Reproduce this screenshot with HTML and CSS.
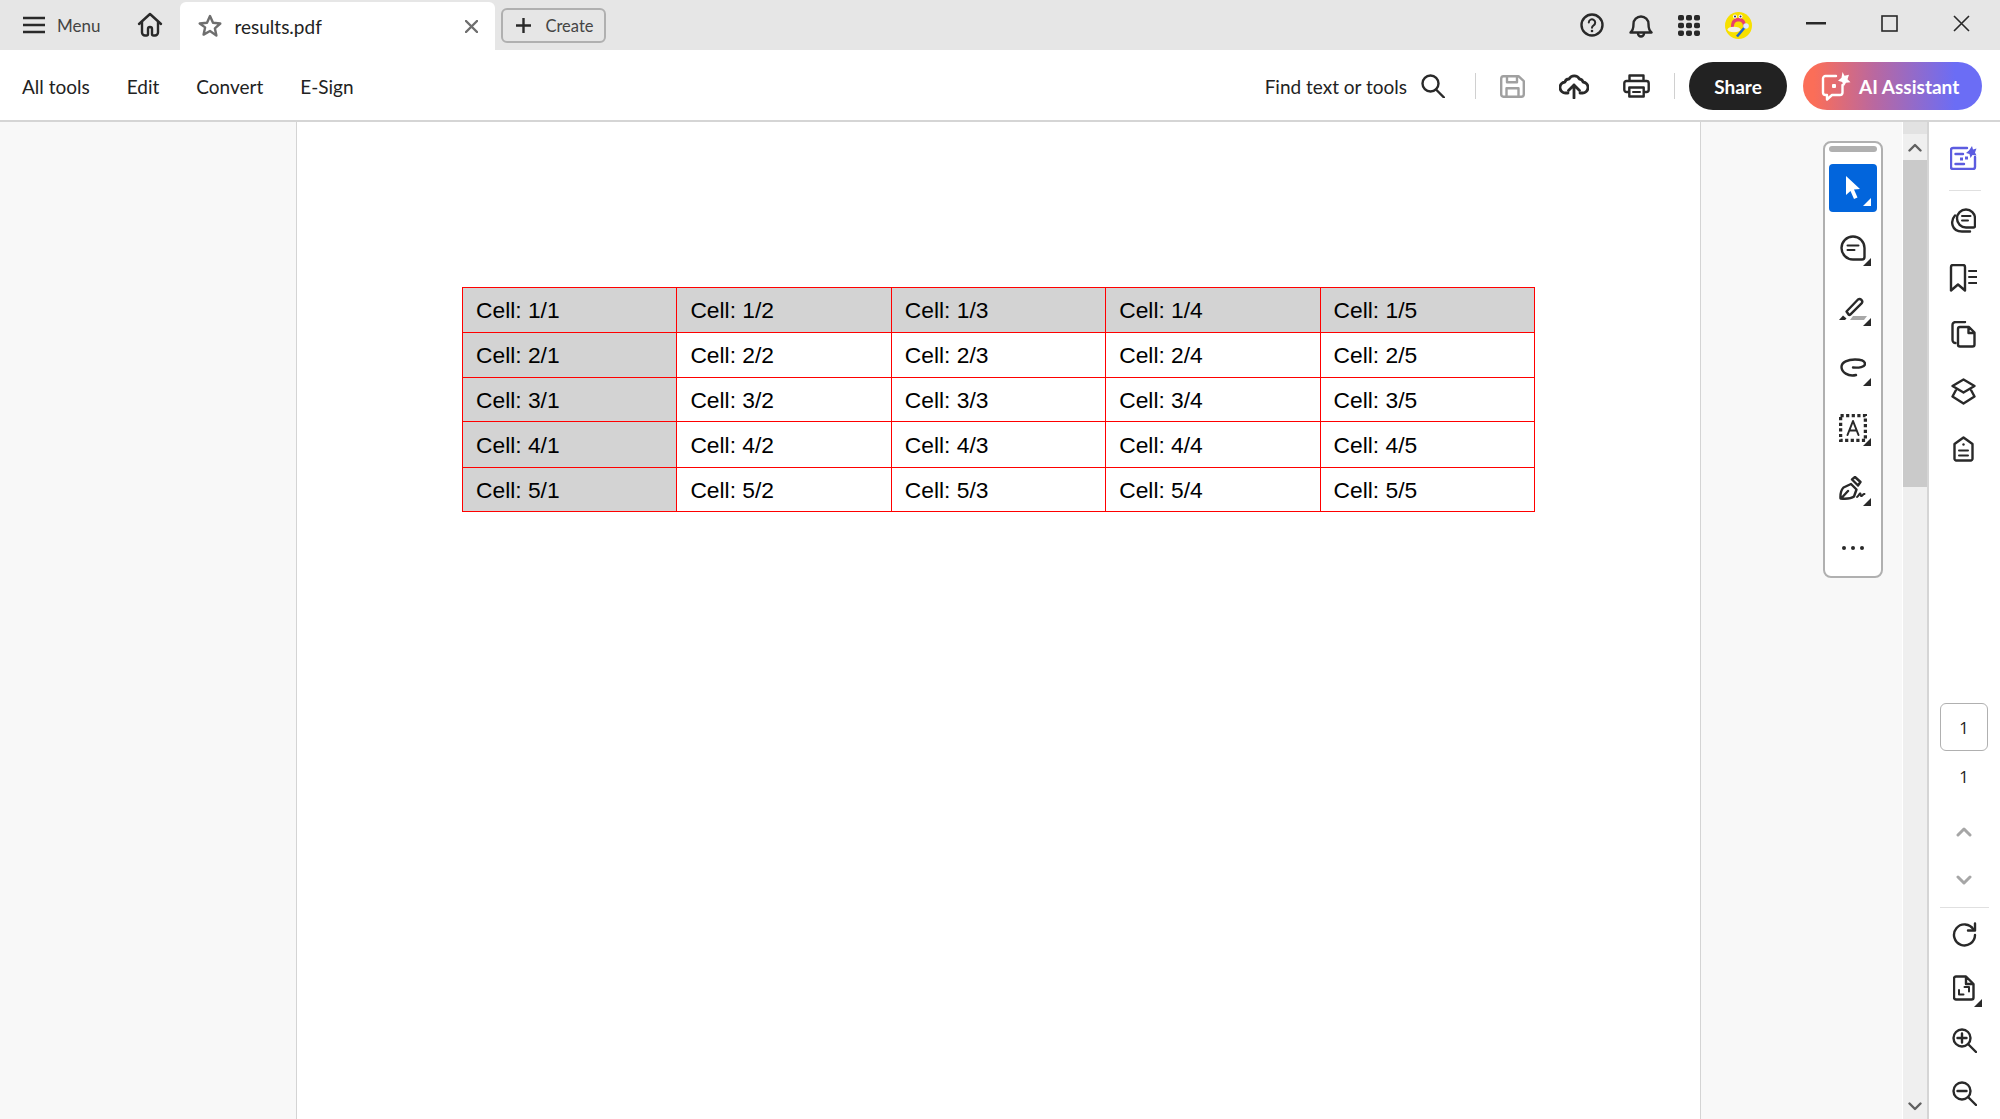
FILE: index.html
```html
<!DOCTYPE html>
<html lang="en">
<head>
<meta charset="utf-8">
<title>results.pdf</title>
<link rel="stylesheet" href="styles.css">
</head>
<body>
<header class="tabbar">
  <button class="menu-btn">
    <svg width="22" height="18" viewBox="0 0 22 18"><path class="st" d="M0 2h22M0 9h22M0 16h22"/></svg>
    <span>Menu</span>
  </button>
  <svg class="home" width="26" height="26" viewBox="0 0 26 26"><path class="st" d="M2 12 13 2l11 10M5 10v10.500a3 3 0 0 0 3 3h1.500a1.500 1.500 0 0 0 1.500-1.500v-5a2 2 0 0 1 4 0v5a1.500 1.500 0 0 0 1.500 1.500H18a3 3 0 0 0 3-3V10"/></svg>
  <div class="tab">
    <svg width="24" height="24" viewBox="0 0 24 24"><path class="st grey" d="m12 2 3 6.700 7.300.8-5.400 4.900 1.500 7.200L12 17l-6.400 3.600 1.500-7.200L1.700 9.500 9 8.700z"/></svg>
    <span class="tab-name">results.pdf</span>
    <svg class="tab-close" width="13" height="13" viewBox="0 0 13 13"><path class="st grey" d="m1 1 11 11M12 1 1 12"/></svg>
  </div>
  <button class="create">
    <svg width="15" height="15" viewBox="0 0 15 15"><path class="st" d="M7.500 0v15M0 7.500h15"/></svg>
    <span>Create</span>
  </button>
  <div class="tab-icons">
    <svg width="24" height="24" viewBox="0 0 24 24"><circle class="st" cx="12" cy="12" r="10.500"/><path class="st thin" d="M8.800 9.500a3.200 3.200 0 1 1 4.800 2.800c-1 .6-1.600 1.200-1.600 2.400"/><circle class="fl" cx="12" cy="18" r="1.300"/></svg>
    <svg width="24" height="26" viewBox="0 0 24 26"><path class="st" d="M1.500 20.500c2.500-2 3-4 3-8.500a7.500 7.500 0 0 1 15 0c0 4.500.5 6.500 3 8.500z"/><path class="st" d="M9 21.500a3 3 0 0 0 6 0"/></svg>
    <svg width="22" height="21" viewBox="0 0 22 21"><g class="fl"><rect x="0" y="0" width="6" height="5.500" rx="1.800"/><rect x="8" y="0" width="6" height="5.500" rx="1.800"/><rect x="16" y="0" width="6" height="5.500" rx="1.800"/><rect x="0" y="7.700" width="6" height="5.500" rx="1.800"/><rect x="8" y="7.700" width="6" height="5.500" rx="1.800"/><rect x="16" y="7.700" width="6" height="5.500" rx="1.800"/><rect x="0" y="15.400" width="6" height="5.500" rx="1.800"/><rect x="8" y="15.400" width="6" height="5.500" rx="1.800"/><rect x="16" y="15.400" width="6" height="5.500" rx="1.800"/></g></svg>
    <svg width="27" height="27" viewBox="0 0 27 27"><circle cx="13.500" cy="13.500" r="13.500" fill="#f7e000"/><path d="M6 15c0-7 3-9 7.500-9S21 8 21 15l-3 0c0-4-1.500-5.500-4.500-5.500S9 11 9 15z" fill="#e8416b"/><circle cx="10" cy="4.500" r="2" fill="#fff"/><circle cx="15.500" cy="4.500" r="2" fill="#fff"/><circle cx="10" cy="4.500" r="1" fill="#226"/><circle cx="15.500" cy="4.500" r="1" fill="#226"/><ellipse cx="9" cy="17.500" rx="6.500" ry="2.800" fill="#f4f0e4"/><path d="M12 24.500 20 15" stroke="#1e63d0" stroke-width="2.600" fill="none"/><circle cx="21" cy="14" r="2.800" fill="#dfeaff"/></svg>
  </div>
  <div class="win">
    <svg width="20" height="3" viewBox="0 0 20 3"><rect width="20" height="2.500" class="fl"/></svg>
    <svg width="17" height="17" viewBox="0 0 17 17"><rect x="1" y="1" width="15" height="15" class="st win-st"/></svg>
    <svg width="17" height="17" viewBox="0 0 17 17"><path class="st win-st" d="m1 1 15 15M16 1 1 16"/></svg>
  </div>
</header>

<nav class="toolbar">
  <div class="nav-links">
    <span>All tools</span><span>Edit</span><span>Convert</span><span>E-Sign</span>
  </div>
  <div class="actions">
    <span class="find">Find text or tools</span>
    <svg class="search" width="24" height="24" viewBox="0 0 24 24"><circle class="st" cx="9.500" cy="9.500" r="8"/><path class="st" d="m15 15.500 8 8"/></svg>
    <i class="vr first"></i>
    <svg class="save" width="25" height="23" viewBox="0 0 25 23"><path class="st muted" d="M3.500 1.200h15l5.300 5v13a2.500 2.500 0 0 1-2.500 2.500H3.500A2.500 2.500 0 0 1 1.200 19.200V3.700a2.500 2.500 0 0 1 2.300-2.500zM7 1.200v6h10v-6M6.500 21.700v-8.500h12v8.500"/></svg>
    <svg class="upload" width="30" height="26" viewBox="0 0 30 26"><path class="st bold" d="M9 20H7A5.500 5.500 0 0 1 6 9a4 4 0 0 1 4-3 6 6 0 0 1 10.500 0A4 4 0 0 1 24 9a5.500 5.500 0 0 1-1 11h-2"/><path class="st bold" d="M15 25V12M9.500 17.500 15 12l5.500 5.500"/></svg>
    <svg class="print" width="27" height="24" viewBox="0 0 27 24"><path class="st" d="M6.500 7V1.500h14V7M6 18H3.500a2.200 2.200 0 0 1-2.200-2.200V9.200A2.200 2.200 0 0 1 3.500 7h20a2.200 2.200 0 0 1 2.200 2.200v6.600a2.200 2.200 0 0 1-2.200 2.200H21"/><rect class="st" x="6.300" y="13.500" width="14.400" height="9"/><path class="st thin" d="M10 18h7"/></svg>
    <i class="vr second"></i>
    <button class="share"><span class="lift">Share</span></button>
    <button class="ai">
      <svg width="30" height="30" viewBox="0 0 30 30"><path class="st white" d="M15 5H4.500A2.500 2.500 0 0 0 2 7.500v14A2.500 2.500 0 0 0 4.500 24H6v4.500l5-4.500h8a2.500 2.500 0 0 0 2.500-2.500V14"/><path d="m21.500 1 2 3.800 4.500-1-1.500 4.500 3 3-4.500.5-2.300 3.700-1.500-4.500-4.200-1.200 3.500-3z" fill="#fff"/><rect x="11" y="13" width="4" height="4" rx="1" fill="#fff"/></svg>
      <span class="lift">AI Assistant</span>
    </button>
  </div>
</nav>

<main class="workspace">
  <aside class="left-panel"></aside>
  <section class="page">
    <table class="grid">
      <tbody>
        <tr class="r1"><td class="sh">Cell: 1/1</td><td class="sh">Cell: 1/2</td><td class="sh">Cell: 1/3</td><td class="sh">Cell: 1/4</td><td class="sh">Cell: 1/5</td></tr>
        <tr class="r2"><td class="sh">Cell: 2/1</td><td>Cell: 2/2</td><td>Cell: 2/3</td><td>Cell: 2/4</td><td>Cell: 2/5</td></tr>
        <tr class="r3"><td class="sh">Cell: 3/1</td><td>Cell: 3/2</td><td>Cell: 3/3</td><td>Cell: 3/4</td><td>Cell: 3/5</td></tr>
        <tr class="r4"><td class="sh">Cell: 4/1</td><td>Cell: 4/2</td><td>Cell: 4/3</td><td>Cell: 4/4</td><td>Cell: 4/5</td></tr>
        <tr class="r5"><td class="sh">Cell: 5/1</td><td>Cell: 5/2</td><td>Cell: 5/3</td><td>Cell: 5/4</td><td>Cell: 5/5</td></tr>
      </tbody>
    </table>
  </section>
  <div class="gutter">
    <div class="tools">
      <div class="handle"></div>
      <div class="tool active corner"><svg width="22" height="26" viewBox="0 0 22 26"><path d="M4 1v19l4.500-4 3.500 8 3.500-1.600-3.500-7.800 6-.6z" fill="#fff"/></svg></div>
      <div class="tool corner"><svg width="26" height="26" viewBox="0 0 26 26"><path class="st" d="M13 1.500a11.500 11.500 0 1 0 0 23h9a2.500 2.500 0 0 0 2.500-2.500v-9A11.500 11.500 0 0 0 13 1.500z"/><path class="st thin" d="M7.500 10.500h11M7.500 15h7"/></svg></div>
      <div class="tool corner"><svg width="28" height="25" viewBox="0 0 28 25"><path class="st" d="m7.500 15.500 11.500-12a2.700 2.700 0 0 1 3.800 3.700L11 18.800a1 1 0 0 1-1.200 0z"/><path d="m0 24 4-4.500 3.500 3L6 24z" class="fl"/><path d="M11 24l3-4h14l-3 4z" fill="#a8a8a8"/></svg></div>
      <div class="tool corner"><svg width="26" height="20" viewBox="0 0 26 20"><path class="st" d="M16 17C8 19 1.500 14 1.500 9 1.500 4 8 1.500 15 1.500c6 0 10 1.500 10 4.500s-6 4-12 3.500"/></svg></div>
      <div class="tool corner"><svg width="28" height="28" viewBox="0 0 28 28"><rect class="dash" x="1.500" y="1.500" width="25" height="25"/><path class="st thin" d="m8.500 21 5.500-14 5.500 14M10.300 16.500h7.400"/></svg></div>
      <div class="tool corner"><svg width="28" height="24" viewBox="0 0 28 24"><path class="st" d="M1.500 22.500c-.3-5 .5-8.500 3-11L12 8l5.500 5.500-2.500 7c-2.500 2-8 2.500-13.500 2zM13 3.500l3-2.500 5.500 5-2.500 3.500zM2.500 22l6.500-7"/><path class="st thin" d="M18 21c1.500-1 2-3 3-3.500s0 3 1.500 2.500 1.500-2.500 3-2"/></svg></div>
      <div class="tool dots"><i></i><i></i><i></i></div>
    </div>
  </div>
  <div class="scrollbar">
    <div class="sb-cap"></div>
    <div class="sb-up"><svg width="14" height="9" viewBox="0 0 14 9"><path class="st sb-st" d="m1.500 7.500 5.500-5.500 5.500 5.500"/></svg></div>
    <div class="sb-thumb"></div>
    <div class="sb-down"><svg width="14" height="9" viewBox="0 0 14 9"><path class="st sb-st" d="m1.500 1.500 5.500 5.500 5.500-5.500"/></svg></div>
  </div>
  <aside class="rail">
    <div class="rail-btn"><svg width="27" height="24" viewBox="0 0 27 24"><path class="st ai-st" d="M17 2H3a2 2 0 0 0-2 2v17a2 2 0 0 0 2 2h20a2 2 0 0 0 2-2V11M5.500 8H13M5.500 18H14"/><path class="ai-fl" d="m22 0 1 3.500 3.500-1-1.500 4 1.500 3-4-.5-2 3-1-4-3.500-1 3-2.500zM10 11.500h3v3h-3zM15 10.500h3v3h-3z"/></svg></div>
    <hr class="rail-hr">
    <div class="rail-btn"><svg width="26" height="25" viewBox="0 0 26 25"><path class="st" d="M16 1.500a9 9 0 0 0 0 18h7.500a1.500 1.500 0 0 0 1.500-1.500v-7.500a9 9 0 0 0-9-9z"/><path class="st" d="M5 7.500c-5 5.500-3.500 16 7 16h8"/><path class="st thin" d="M12 8h8.500M12 12.500h6"/></svg></div>
    <div class="rail-btn"><svg width="28" height="28" viewBox="0 0 28 28"><path class="st" d="M2 26.500V3a2 2 0 0 1 2-2h10a2 2 0 0 1 2 2v23.500l-7-6z"/><path class="st thin" d="M20 7h8M20 13h8M20 19h8"/></svg></div>
    <div class="rail-btn"><svg width="25" height="27" viewBox="0 0 25 27"><path class="st" d="M4.500 22A3 3 0 0 1 1.500 19V4a3 3 0 0 1 3-3H14"/><path class="st" d="M9 25.500a2 2 0 0 1-2-2V8a2 2 0 0 1 2-2h9l5.500 5.500v12a2 2 0 0 1-2 2zM17.500 6.500V12H23"/></svg></div>
    <div class="rail-btn"><svg width="25" height="27" viewBox="0 0 25 27"><path class="st" d="M12.500 1.500 23.500 8l-11 6.500L1.500 8zM5 12l-3.500 6.500 11 7 11-7L20 12"/></svg></div>
    <div class="rail-btn"><svg width="21" height="26" viewBox="0 0 21 26"><path class="st" d="M10.500 1.500 19.500 8v15a2 2 0 0 1-1.500 1.500H3A2 2 0 0 1 1.500 23V8z"/><path class="st thin" d="M6 14.500h9M6 19.500h9"/><circle class="fl" cx="10.500" cy="8.500" r="1.200"/></svg></div>
    <div class="rail-bottom">
      <div class="page-box">1</div>
      <div class="page-total">1</div>
      <div class="chev up"><svg width="16" height="10" viewBox="0 0 16 10"><path class="st chev-st" d="m2 8 6-6 6 6"/></svg></div>
      <div class="chev down"><svg width="16" height="10" viewBox="0 0 16 10"><path class="st chev-st" d="m2 2 6 6 6-6"/></svg></div>
      <hr class="rail-hr low">
      <div class="rail-low"><svg width="25" height="25" viewBox="0 0 25 25"><path class="st" d="M21.500 7.500A10.500 10.500 0 1 0 23 13"/><path class="st" d="M23 1.500v7h-7"/></svg></div>
      <div class="rail-low corner-out"><svg width="22" height="26" viewBox="0 0 22 26"><path class="st" d="M3 1.500h10l7.500 7.500v13.500a2 2 0 0 1-2 2H3a2 2 0 0 1-2-2v-19a2 2 0 0 1 2-2zM13 2v7h7"/><path class="st thin" d="M6 15v4.500h4.500M16 16.500V12h-4.500"/></svg></div>
      <div class="rail-low"><svg width="25" height="25" viewBox="0 0 25 25"><circle class="st" cx="10" cy="10" r="8.500"/><path class="st" d="m16 16 8 8M10 5.500v9M5.500 10h9"/></svg></div>
      <div class="rail-low"><svg width="25" height="25" viewBox="0 0 25 25"><circle class="st" cx="10" cy="10" r="8.500"/><path class="st" d="m16 16 8 8M5.500 10h9"/></svg></div>
    </div>
  </aside>
</main>
</body>
</html>
```
FILE: styles.css
```css
* { box-sizing: border-box; }
html, body { margin: 0; height: 100%; overflow: hidden; }
body {
  display: flex;
  flex-direction: column;
  height: 1119px;
  font-family: "Lato", "Noto Sans", sans-serif;
  color: #222;
  background: #fff;
}
button { font: inherit; color: inherit; background: none; border: 0; padding: 0; }
svg { display: block; flex: none; }
.st { fill: none; stroke: #292929; stroke-width: 2.4; stroke-linecap: round; stroke-linejoin: round; }
.st.thin { stroke-width: 2; }
.st.bold { stroke-width: 2.8; }
.st.grey { stroke: #6e6e6e; }
.st.muted { stroke: #a0a0a0; }
.st.white { stroke: #fff; }
.st.win-st { stroke-width: 1.6; stroke-linecap: butt; stroke-linejoin: miter; }
.st.sb-st { stroke: #606060; }
.st.chev-st { stroke: #a6a6a6; stroke-width: 3; }
.st.ai-st { stroke: #5c5ce0; }
.ai-fl { fill: #5c5ce0; }
.fl { fill: #292929; }

.tabbar {
  flex: none;
  height: 50px;
  display: flex;
  align-items: center;
  background: #e6e6e6;
}
.menu-btn { display: flex; align-items: center; margin-left: 23px; gap: 12px; font-size: 17px; color: #444; }
.home { margin-left: 37px; }
.tab {
  align-self: flex-end;
  width: 315px;
  height: 48px;
  margin-left: 17px;
  display: flex;
  align-items: center;
  background: #fff;
  border-radius: 6px 6px 0 0;
  padding-left: 18px;
  padding-right: 17px;
}
.tab-name { margin-left: 12px; font-size: 19px; color: #222; }
.tab-close { margin-left: auto; }
.create {
  width: 105px;
  height: 35px;
  margin-left: 6px;
  display: flex;
  align-items: center;
  gap: 14px;
  padding-left: 13px;
  padding-top: 1px;
  border: 2px solid #b0b0b0;
  border-radius: 6px;
  font-size: 16.5px;
  color: #444;
}
.tab-icons { margin-left: auto; display: flex; align-items: center; gap: 25px; }
.win { display: flex; align-items: center; gap: 55px; margin-left: 54px; margin-right: 30px; margin-top: -4px; }

.toolbar {
  flex: none;
  height: 72px;
  display: flex;
  align-items: center;
  justify-content: space-between;
  background: #fff;
  padding-top: 2px;
  border-bottom: 2px solid #d5d5d5;
}
.nav-links { display: flex; gap: 37px; margin-left: 22px; font-size: 19px; color: #222; }
.actions { display: flex; align-items: center; margin-right: 18px; }
.find { font-size: 19px; }
.search { margin-left: 14px; }
.vr { display: block; width: 1px; height: 26px; background: #d0d0d0; }
.vr.first { margin-left: 30px; }
.save { margin-left: 24px; }
.upload { margin-left: 34px; }
.print { margin-left: 34px; }
.vr.second { margin-left: 24px; }
.lift { display: block; }
.share {
  margin-left: 14px;
  width: 98px;
  height: 48px;
  border-radius: 24px;
  background: #222;
  color: #fff;
  font-size: 19px;
  font-weight: 700;
}
.ai {
  margin-left: 16px;
  width: 179px;
  height: 48px;
  display: flex;
  align-items: center;
  gap: 8px;
  padding-left: 18px;
  border-radius: 24px;
  background: linear-gradient(90deg, #fb6e58 6%, #b968a0 40%, #6b6df5 85%);
  color: #fff;
  font-size: 19px;
  font-weight: 700;
}

.workspace { flex: 1; min-height: 0; display: flex; }
.left-panel { width: 296px; background: #f8f8f8; }
.page {
  width: 1405px;
  background: #fff;
  border-left: 1px solid #d4d4d4;
  border-right: 1px solid #d4d4d4;
  padding: 165px 0 0 165px;
}
.grid {
  width: 1073px;
  table-layout: fixed;
  border-collapse: collapse;
  font-family: "Liberation Sans", Arial, sans-serif;
  font-size: 22.8px;
  color: #000;
}
.grid td { border: 1px solid #f00; padding: 1px 0 0 13px; vertical-align: middle; }
.grid td.sh { background: #d3d3d3; }
.r1 { height: 45px; }
.r2 { height: 45px; }
.r3 { height: 44px; }
.r4 { height: 46px; }
.r5 { height: 44px; }

.gutter { width: 201px; background: #f8f8f8; padding: 19px 0 0 122px; }
.tools {
  width: 60px;
  height: 437px;
  background: #fff;
  border: 2px solid #b0b0b0;
  border-radius: 8px;
  display: flex;
  flex-direction: column;
  align-items: center;
  gap: 12px;
  padding-top: 3px;
}
.handle { width: 48px; height: 6px; border-radius: 3px; background: #b0b0b0; flex: none; }
.tool {
  width: 48px;
  height: 48px;
  flex: none;
  position: relative;
  display: flex;
  align-items: center;
  justify-content: center;
  border-radius: 4px;
}
.tool.active { background: #0265dc; }
.tool.corner::after, .corner-out::after {
  content: "";
  position: absolute;
  right: 6px;
  bottom: 6px;
  width: 8px;
  height: 8px;
  background: #292929;
  clip-path: polygon(100% 0, 100% 100%, 0 100%);
}
.tool.active.corner::after { background: #fff; }
.dots { gap: 5px; }
.dots i { width: 4px; height: 4px; border-radius: 50%; background: #292929; }
.dash { fill: none; stroke: #292929; stroke-width: 3.5; stroke-dasharray: 3.2 2.4; }

.scrollbar { width: 26px; display: flex; flex-direction: column; background: #efefef; margin-left: 1px; border-right: 2px solid #d5d5d5; }
.sb-cap { height: 12px; background: #e2e2e2; }
.sb-up { height: 26px; display: flex; align-items: center; justify-content: center; }
.sb-thumb { height: 327px; background: #cacaca; }
.sb-down { margin-top: auto; height: 26px; display: flex; align-items: center; justify-content: center; }

.rail { flex: 1; display: flex; flex-direction: column; align-items: center; padding-top: 7px; background: #fff; font-family: "Open Sans", sans-serif; }
.rail-btn { height: 57px; width: 100%; display: flex; align-items: center; justify-content: center; padding-right: 3px; flex: none; }
.rail-hr { width: 32px; height: 1px; margin: 4px 0 1px; border: 0; background: #e0e0e0; flex: none; }
.rail-bottom { margin-top: auto; margin-bottom: -1px; padding-right: 1px; width: 100%; display: flex; flex-direction: column; align-items: center; }
.page-box {
  width: 48px;
  height: 48px;
  border: 1px solid #b0b0b0;
  border-radius: 6px;
  display: flex;
  align-items: center;
  justify-content: center;
  font-size: 16.5px;
  color: #222;
}
.page-total { margin-top: 6px; height: 38px; display: flex; align-items: center; justify-content: center; font-size: 16.5px; color: #222; }
.chev { height: 48px; display: flex; align-items: center; justify-content: center; }
.chev.up { margin-top: 13px; }
.rail-hr.low { margin: 3px 0 0; width: 49px; }
.rail-low { height: 53px; width: 100%; display: flex; align-items: center; justify-content: center; position: relative; }
.corner-out::after { right: 17px; bottom: 7px; }
```
